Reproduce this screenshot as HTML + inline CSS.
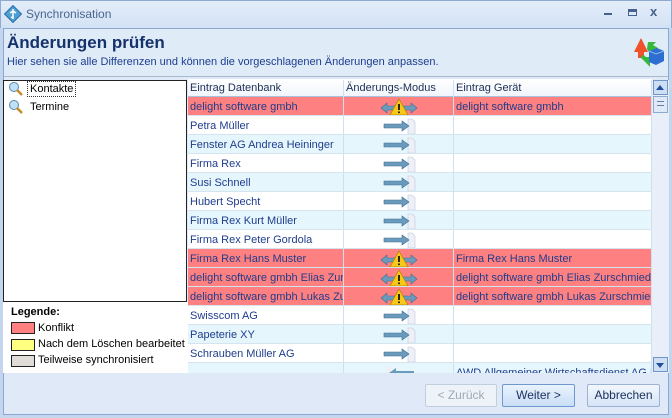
<!DOCTYPE html>
<html><head><style>
*{margin:0;padding:0;box-sizing:border-box}
body{width:672px;height:418px;overflow:hidden;font-family:"Liberation Sans",sans-serif;font-size:11px;background:#c4d6ee;position:relative}
.abs{position:absolute}
#title{left:0;top:0;width:672px;height:28px;background:linear-gradient(#e3edf9,#d3e2f5);border:1px solid #8eaad0;border-bottom:none}
#client{left:3px;top:28px;width:666px;height:387px;background:#dfe9f7;border:1px solid #8ba8d2}
.hdr{font-weight:bold;font-size:17px;color:#15326b}
.row{position:absolute;left:188px;width:464px;height:19px;border-bottom:1px solid #d6e4f0;color:#1f3d8c;font-size:11px}
.row div{position:absolute;top:0;height:18px;line-height:20px;padding-left:2px;white-space:nowrap;overflow:hidden;border-right:1px solid #d0e0ee}
.c1{left:0;width:156px}.c2{left:156px;width:110px;text-align:center}.c3{left:266px;width:198px}
.w{background:#fff}.b{background:#e5f6fd}.r{background:#ff8080}
.btn{position:absolute;top:384px;height:23px;border:1px solid #9bb3d6;border-radius:2px;background:linear-gradient(#f2f7fd,#d6e4f6);text-align:center;line-height:21px;font-size:12px;color:#1c3360}
.leg{position:absolute;left:11px;width:24px;height:12px;border:1px solid #222}
</style></head><body>
<div id="title" class="abs"></div>
<svg class="abs" style="left:4px;top:5px" width="18" height="18" viewBox="0 0 18 18"><rect x="3" y="3" width="12" height="12" transform="rotate(45 9 9)" fill="#4d9fd3" stroke="#2a70a8"/><path d="M9 4v10M6 8l3-2 3 2M7 12l2 1" stroke="#fff" stroke-width="1.5" fill="none"/></svg>
<div class="abs" style="left:26px;top:7px;font-size:12px;color:#4a6690">Synchronisation</div>
<div class="abs" style="left:604px;top:13px;width:8px;height:2px;background:#46618c"></div>
<div class="abs" style="left:628px;top:9px;width:9px;height:7px;border:1px solid #46618c;border-top-width:3px"></div>
<div class="abs" style="left:650px;top:4px;font-size:13px;font-weight:bold;color:#46618c">x</div>
<div id="client" class="abs"></div>
<div class="abs" style="left:4px;top:29px;width:664px;height:48px;background:#e0ebf8;border-bottom:1px solid #a9b9cc"></div>
<div class="abs hdr" style="left:7px;top:33px">Änderungen prüfen</div>
<div class="abs" style="left:7px;top:56px;color:#1d3e90;font-size:11px">Hier sehen sie alle Differenzen und können die vorgeschlagenen Änderungen anpassen.</div>
<svg class="abs" style="left:632px;top:36px" width="34" height="32" viewBox="0 0 34 32"><path d="M9 2L2 16h4v6h6v-6h4z" fill="#f0502a"/><path d="M16 6h8l-3 3 5 3-8 6-3-5z" fill="#36b83a"/><path d="M10 20l6 6v-3h6" stroke="#36b83a" stroke-width="4" fill="none"/><path d="M17 15l8-3 7 3v10l-8 4-7-3z" fill="#2c6fd0"/><path d="M17 15l7 3 8-3" stroke="#8ab8f0" fill="none"/></svg>
<div class="abs" style="left:3px;top:80px;width:184px;height:222px;background:#fff;border:1px solid #222"></div>
<svg class="abs" style="left:8px;top:81px" width="16" height="16"><circle cx="6" cy="6" r="4.5" fill="#bfe0f5" stroke="#5b87b0"/><path d="M9 9l5 5" stroke="#c88a2c" stroke-width="2.5"/></svg>
<div class="abs" style="left:27px;top:81px;height:16px;border:1px dotted #333;padding:1px 2px;font-size:11px">Kontakte</div>
<svg class="abs" style="left:8px;top:99px" width="16" height="16"><circle cx="6" cy="6" r="4.5" fill="#bfe0f5" stroke="#5b87b0"/><path d="M9 9l5 5" stroke="#c88a2c" stroke-width="2.5"/></svg>
<div class="abs" style="left:30px;top:101px">Termine</div>
<div class="abs" style="left:3px;top:302px;width:185px;height:71px;background:#fff"></div>
<div class="abs" style="left:11px;top:306px;font-weight:bold;font-size:11px">Legende:</div>
<div class="leg" style="top:322px;background:#ff8080"></div><div class="abs" style="left:38px;top:322px">Konflikt</div>
<div class="leg" style="top:339px;background:#ffff80"></div><div class="abs" style="left:38px;top:338px">Nach dem Löschen bearbeitet</div>
<div class="leg" style="top:355px;background:#e0ddd8"></div><div class="abs" style="left:38px;top:354px">Teilweise synchronisiert</div>
<div class="abs" style="left:188px;top:80px;width:464px;height:293px;background:#e5f6fd"></div>
<div class="row" style="top:79px;background:linear-gradient(#fff,#f1f5fb);color:#1c2f55;border-bottom:1px solid #a8c2de;height:18px"><div class="c1" style="top:1px;line-height:17px">Eintrag Datenbank</div><div class="c2" style="top:1px;text-align:left;line-height:17px">Änderungs-Modus</div><div class="c3" style="top:1px;line-height:17px">Eintrag Gerät</div></div>
<div id="rows"></div>
<div class="abs" style="left:4px;top:373px;width:664px;height:41px;background:#dfe9f7"></div>
<div class="abs" style="left:652px;top:80px;width:17px;height:293px;background:#e8eff8"></div>
<div class="abs" style="left:653px;top:80px;width:15px;height:15px;background:#cfdff3;border:1px solid #6f94c8"></div>
<div class="abs" style="left:656px;top:85px;border:4px solid transparent;border-bottom:5px solid #1f4e9c;border-top:none"></div>
<div class="abs" style="left:653px;top:96px;width:15px;height:17px;background:#dfe9f7;border:1px solid #8eaad0"></div>
<div class="abs" style="left:657px;top:101px;width:7px;height:5px;border-top:1px solid #6a7ea0;border-bottom:1px solid #6a7ea0"></div>
<div class="abs" style="left:653px;top:357px;width:15px;height:15px;background:#cfdff3;border:1px solid #6f94c8"></div>
<div class="abs" style="left:656px;top:363px;border:4px solid transparent;border-top:5px solid #1f4e9c;border-bottom:none"></div>
<div class="btn" style="left:425px;width:72px;color:#a0a8b4;background:#eef3fa;border-color:#c0cede">&lt; Zurück</div>
<div class="btn" style="left:502px;width:73px;border-color:#6e98d0;background:linear-gradient(#eaf3fd,#c9def6)">Weiter &gt;</div>
<div class="btn" style="left:587px;width:73px">Abbrechen</div>
<script>
var d=[["delight software gmbh","c","delight software gmbh"],["Petra Müller","a",""],["Fenster AG Andrea Heininger","a",""],["Firma Rex","a",""],["Susi Schnell","a",""],["Hubert Specht","a",""],["Firma Rex Kurt Müller","a",""],["Firma Rex Peter Gordola","a",""],["Firma Rex Hans Muster","c","Firma Rex Hans Muster"],["delight software gmbh Elias Zurschmiede","c","delight software gmbh Elias Zurschmiede"],["delight software gmbh Lukas Zurschmiede","c","delight software gmbh Lukas Zurschmiede"],["Swisscom AG","a",""],["Papeterie XY","a",""],["Schrauben Müller AG","a",""],["","l","AWD Allgemeiner Wirtschaftsdienst AG F"]];
var arrow='<svg width="34" height="18" viewBox="0 0 34 18"><path d="M26 2h4l3 3v12h-7z" fill="#eef0f8" stroke="#c0c6dc" stroke-width=".6"/><path d="M2 7h18V4l7 5-7 5v-3H2z" fill="#6a9bbc" stroke="#3e6f90" stroke-width=".6"/></svg>';
var larrow='<svg width="34" height="18" viewBox="0 0 34 18"><path d="M4 2h4l3 3v12H4z" fill="#eef0f8"/><path d="M32 7H14V4L7 9l7 5v-3h18z" fill="#6a9bbc"/></svg>';
var conf='<svg width="40" height="18" viewBox="0 0 40 18"><path d="M2 10l6-5v3h24V5l6 5-6 5v-3H8v3z" fill="#6a9bbc" stroke="#3e6f90" stroke-width=".6"/><path d="M20 1l9 16H11z" fill="#f8c818" stroke="#b08000" stroke-width=".7"/><rect x="19.2" y="6" width="1.6" height="6" fill="#000"/><rect x="19.2" y="13.5" width="1.6" height="1.6" fill="#000"/></svg>';
var h='';d.forEach(function(r,i){var c=r[1]=="c"?"r":(i%2?"w":"b");
h+='<div class="row '+c+'" style="top:'+(97+i*19)+'px"><div class="c1">'+r[0]+'</div><div class="c2" style="padding:0;line-height:0;padding-top:1px">'+(r[1]=="c"?conf:r[1]=="l"?larrow:arrow)+'</div><div class="c3">'+r[2]+'</div></div>';});
document.getElementById('rows').outerHTML=h;
</script>
</body></html>
